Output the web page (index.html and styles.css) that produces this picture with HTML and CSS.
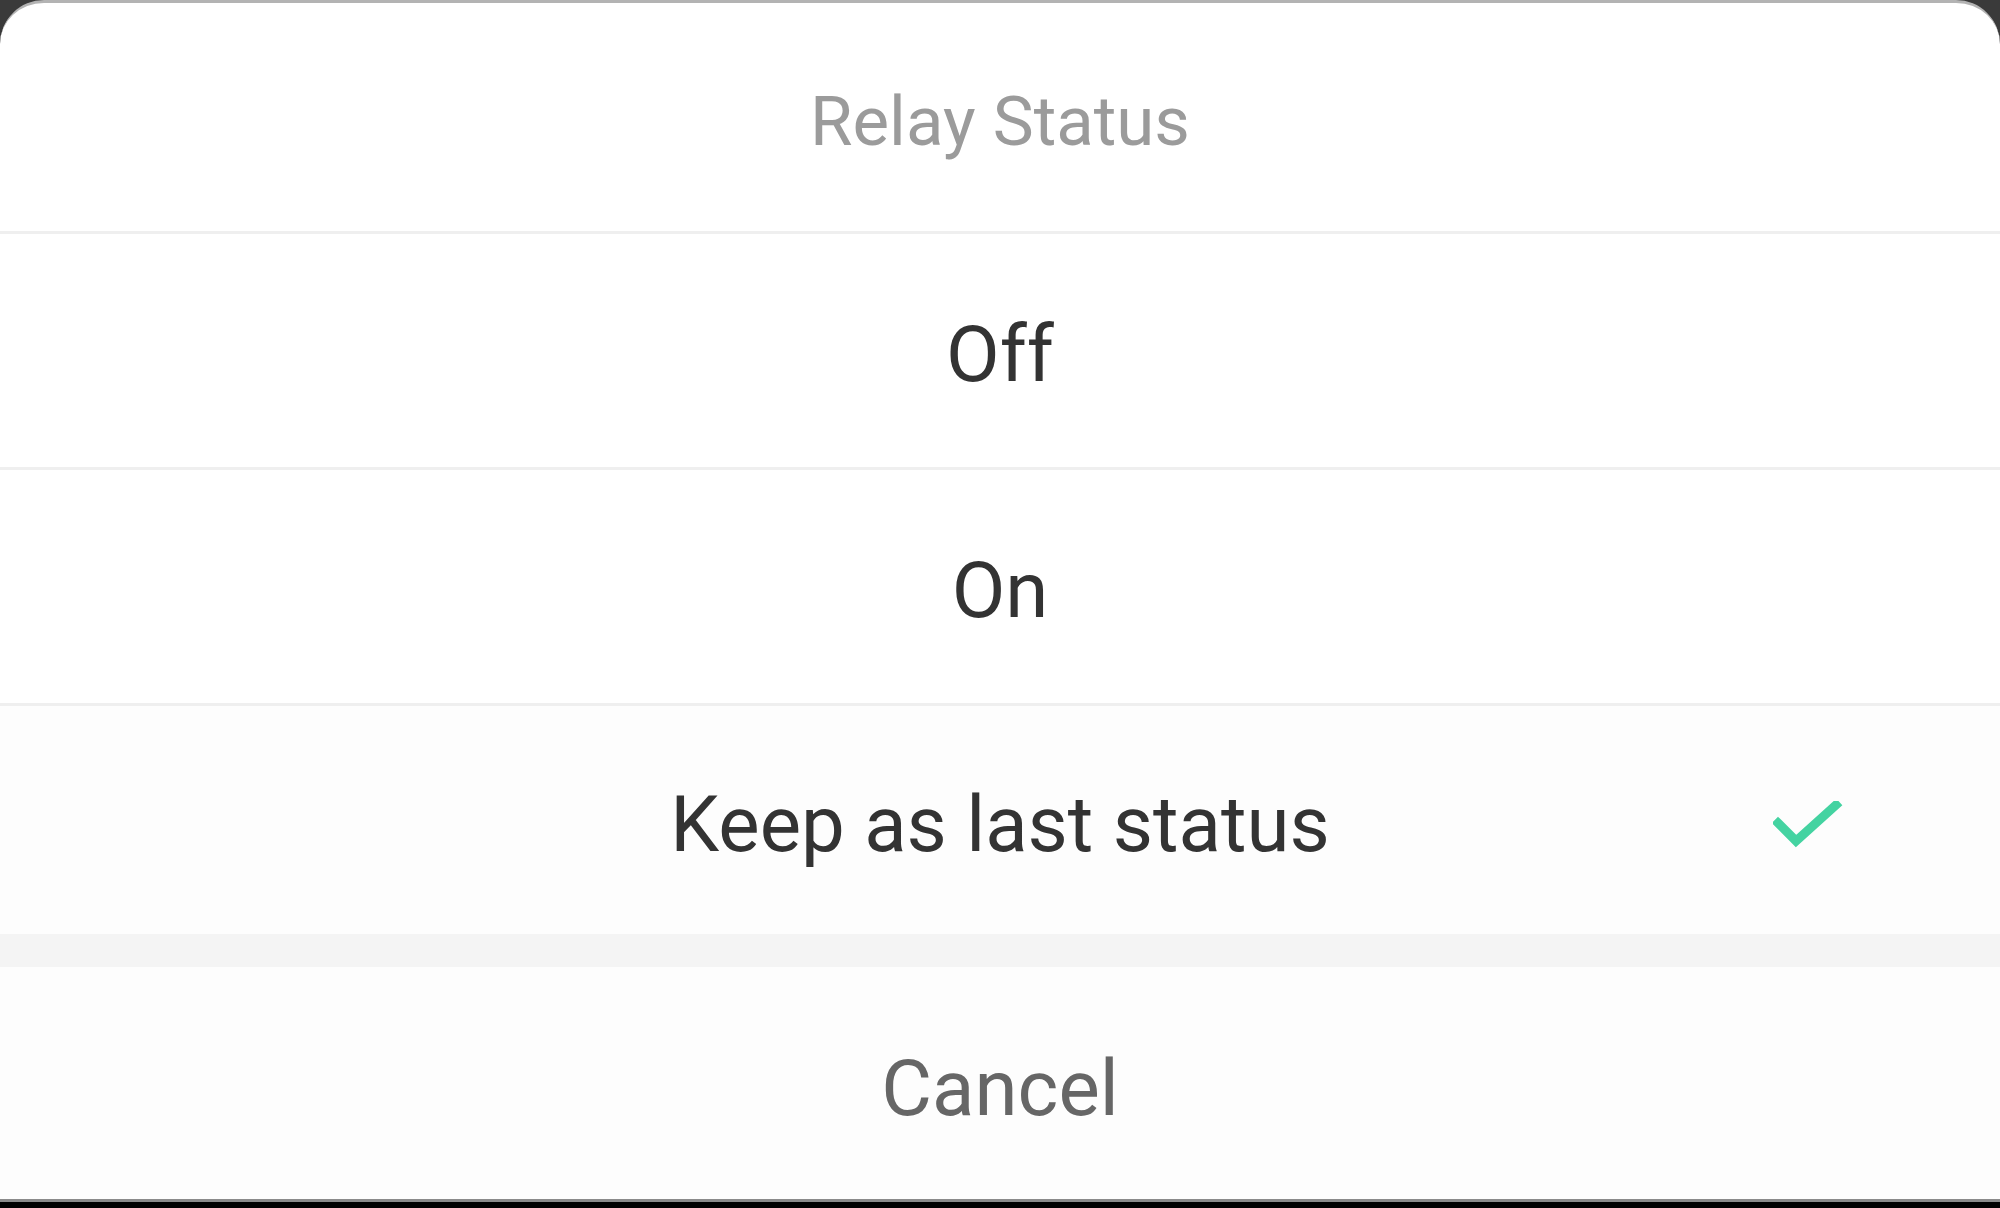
FILE: index.html
```html
<!DOCTYPE html>
<html lang="en">
<head>
<meta charset="utf-8">
<title>Relay Status</title>
<link rel="stylesheet" href="styles.css">
</head>
<body>
<div class="screen">
  <div class="sheet">
    <div class="title">Relay Status</div>
    <div class="option">Off</div>
    <div class="option">On</div>
    <div class="option selected">Keep as last status
      <svg class="check" viewBox="0 0 70 50" width="70" height="50">
        <polyline points="5,22 23,40 63,4" fill="none" stroke="#44d3a1" stroke-width="9" stroke-linecap="square" stroke-linejoin="miter"/>
      </svg>
    </div>
    <div class="gap"></div>
    <div class="cancel">Cancel</div>
  </div>
  <div class="bottom-edge"></div>
  <div class="bottom-black"></div>
</div>
</body>
</html>
```
FILE: styles.css
```css
html, body {
  margin: 0;
  padding: 0;
}
body {
  width: 2000px;
  height: 1208px;
  overflow: hidden;
  background: #000;
  font-family: Roboto, "Liberation Sans", sans-serif;
}
.screen {
  display: flex;
  flex-direction: column;
  height: 1208px;
  background: #3a3a3a;
}
.sheet {
  height: 1196px;
  background: #fff;
  border-top: 3px solid #b3b3b3;
  border-radius: 44px 44px 0 0;
  display: flex;
  flex-direction: column;
}
.title {
  height: 231px;
  display: flex;
  align-items: center;
  justify-content: center;
  font-size: 69px;
  color: #9b9b9b;
  border-bottom: 3px solid #efefef;
  padding-top: 8px;
  box-sizing: border-box;
}
.option {
  position: relative;
  height: 236px;
  display: flex;
  align-items: center;
  justify-content: center;
  font-size: 78px;
  color: #333;
  border-bottom: 3px solid #efefef;
  padding-top: 8px;
  box-sizing: border-box;
}
.option.selected {
  height: 228px;
  border-bottom: none;
  background: #fdfdfd;
}
.check {
  position: absolute;
  left: 1773px;
  top: 95px;
}
.gap {
  height: 33px;
  background: #f4f4f4;
}
.cancel {
  flex: 1;
  display: flex;
  align-items: center;
  justify-content: center;
  font-size: 78px;
  color: #666;
  background: #fdfdfd;
  padding-top: 10px;
}
.bottom-edge {
  height: 3px;
  background: #8a8a8a;
}
.bottom-black {
  flex: 1;
  background: #000;
}
```
